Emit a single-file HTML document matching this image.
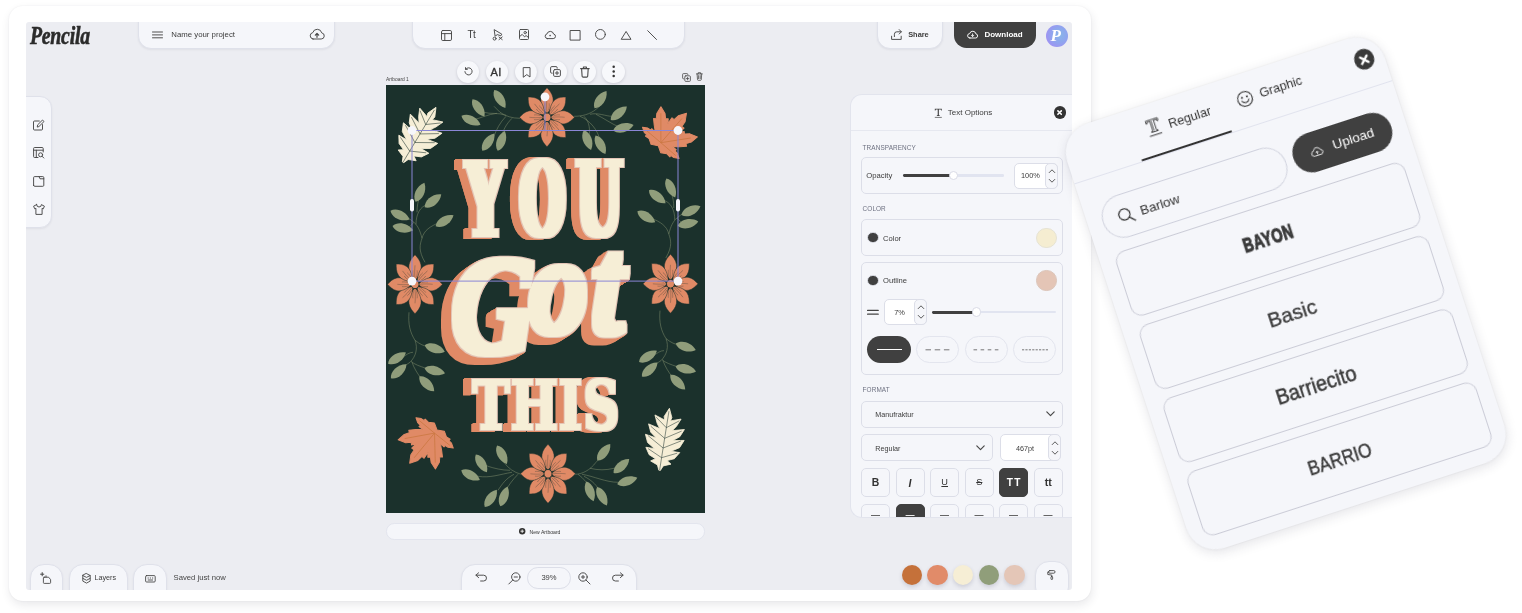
<!DOCTYPE html>
<html lang="en">
<head>
<meta charset="utf-8">
<title>Pencila editor</title>
<style>
*{box-sizing:border-box;margin:0;padding:0}
html,body{width:1522px;height:613px;background:#fff;overflow:hidden}
body{position:relative;font-family:"Liberation Sans",sans-serif;color:#3a3a3a}
.abs{position:absolute}
#card{position:absolute;left:9px;top:6px;width:1082px;height:594.6px;border-radius:14px;background:#fff;box-shadow:1px 4px 10px rgba(40,40,60,.10),0 0 2px rgba(40,40,60,.07)}
#app{will-change:transform;position:absolute;left:26px;top:22px;width:1046px;height:568px;background:#ecedf2;border-radius:3px;overflow:hidden}
.pill{position:absolute;background:#f5f6fa;border:1px solid #dfe1ea;box-shadow:0 1px 2px rgba(60,60,90,.08)}
.t8{font-size:7.8px;line-height:10px;white-space:nowrap;color:#3c3c3c}
svg{position:absolute;overflow:visible}
.ic{fill:none;stroke:#484848;stroke-width:.95;stroke-linecap:round;stroke-linejoin:round}
.lbl{position:absolute;font-size:6.4px;line-height:8px;color:#6d7080;letter-spacing:.1px;white-space:nowrap}
.box{position:absolute;border:1px solid #dcdee8;border-radius:5px;background:#f5f6fa}
.wbox{position:absolute;border:1px solid #dcdee8;border-radius:5px;background:#fff}
.circ{position:absolute;border-radius:50%}
.tb{position:absolute;width:22.4px;height:22.4px;border-radius:50%;background:#f7f8fb;box-shadow:0 1px 3px rgba(50,50,80,.18)}
.fbtn{position:absolute;width:29px;height:28.6px;top:446.4px;border:1px solid #dcdee8;border-radius:5px;background:#f5f6fa;text-align:center;font-size:9px;line-height:27px;color:#333}
</style>
</head>
<body>
<div id="card"></div>
<div id="app">
<!-- logo -->
<div class="abs" style="left:4px;top:-.6px;font-family:'Liberation Serif',serif;font-style:italic;font-weight:bold;font-size:25px;line-height:30px;color:#2b2b2b;-webkit-text-stroke:.6px #2b2b2b;transform-origin:0 0;transform:scaleX(.79);letter-spacing:-.3px">Pencila</div>

<!-- project name pill -->
<div class="pill" style="left:112.2px;top:-14px;width:196.9px;height:41px;border-radius:13px"></div>
<svg class="ic" style="left:126px;top:9px" width="11" height="8" viewBox="0 0 11 8"><path d="M.5 1h10M.5 3.9h10M.5 6.8h10"/></svg>
<div class="abs t8" style="left:145.3px;top:7.6px">Name your project</div>
<svg class="ic" style="left:282.5px;top:6.3px" width="16" height="12" viewBox="0 0 16 12"><path d="M4 11h8.2a3.1 3.1 0 0 0 .5-6.15A4.6 4.6 0 0 0 3.8 4.6 3.25 3.25 0 0 0 4 11z"/><path d="M8 9.3V5.6M6.3 7.2L8 5.5l1.7 1.7" stroke-width="1.2"/></svg>

<!-- tools pill -->
<div class="pill" style="left:386.4px;top:-14px;width:272.8px;height:41px;border-radius:13px"></div>
<svg class="ic" style="left:415px;top:7.5px" width="11" height="11" viewBox="0 0 11 11"><rect x=".5" y=".5" width="10" height="10" rx="1.3"/><path d="M.5 3.6h10M3.8 3.6v6.9"/></svg>
<div class="abs" style="left:441.5px;top:6.5px;font-size:10px;line-height:12px;letter-spacing:-.6px;color:#3c3c3c">Tt</div>
<svg class="ic" style="left:466px;top:7px" width="12" height="12" viewBox="0 0 12 12"><path d="M2.2 1l.9 6.2L5.3 5.6l3.6 1.2L9.6 5.5z"/><circle cx="2.6" cy="9.6" r="1.5"/><path d="M7 8l3.2 2.6M10.2 8L7 10.6"/></svg>
<svg class="ic" style="left:492.5px;top:7.3px" width="10" height="11" viewBox="0 0 10 11"><rect x=".5" y=".5" width="9" height="10" rx="1"/><circle cx="6.2" cy="3.6" r="1.2"/><path d="M.6 7.6l2.6-2.2 2.3 2.4 1.6-1.2 2.3 1.8"/></svg>
<svg class="ic" style="left:517.5px;top:8px" width="12" height="10" viewBox="0 0 12 10"><path d="M3.2 8.6h6a2.3 2.3 0 0 0 .4-4.56A3.4 3.4 0 0 0 3 3.9 2.4 2.4 0 0 0 3.2 8.6z"/><circle cx="6.1" cy="5.6" r=".8" fill="#444" stroke="none"/></svg>
<svg class="ic" style="left:543.6px;top:7.6px" width="11" height="11" viewBox="0 0 11 11"><rect x=".5" y=".5" width="9.6" height="9.6"/></svg>
<svg class="ic" style="left:568.8px;top:7.4px" width="11" height="11" viewBox="0 0 11 11"><circle cx="5.4" cy="5.4" r="4.9"/></svg>
<svg class="ic" style="left:594.8px;top:8.6px" width="11" height="9" viewBox="0 0 11 9"><path d="M5.3.8L10 8.3H.6z"/></svg>
<svg class="ic" style="left:621px;top:8px" width="10" height="10" viewBox="0 0 10 10"><path d="M.7.7l8.8 8.8"/></svg>

<!-- share -->
<div class="pill" style="left:850.6px;top:-14px;width:66.6px;height:41px;border-radius:13px"></div>
<svg class="ic" style="left:864.5px;top:6.8px" width="12" height="11" viewBox="0 0 12 11"><path d="M.6 7.2v3.2h9.6V7.2"/><path d="M3.4 7.6V5.2a2.4 2.4 0 0 1 2.4-2.4h4.4M8.2.6l2.2 2.2-2.2 2.2"/></svg>
<div class="abs" style="left:882.2px;top:7.6px;font-size:7.4px;line-height:10px;font-weight:bold;color:#3c3c3c;white-space:nowrap">Share</div>

<!-- download -->
<div class="abs" style="left:928px;top:-14px;width:82px;height:39.7px;border-radius:12.5px;background:#404040"></div>
<svg class="ic" style="left:941.4px;top:8.2px;stroke:#fff" width="11" height="9" viewBox="0 0 11 9"><path d="M2.9 8h5.6a2.1 2.1 0 0 0 .35-4.17A3.15 3.15 0 0 0 2.7 3.6 2.2 2.2 0 0 0 2.9 8z"/><path d="M5.6 3.9v2.5M4.5 5.4l1.1 1.1 1.1-1.1" stroke-width=".9"/></svg>
<div class="abs" style="left:958.4px;top:7.5px;font-size:8px;line-height:10px;font-weight:bold;color:#fff;white-space:nowrap">Download</div>

<!-- avatar -->
<div class="circ" style="left:1019.7px;top:3.3px;width:22.2px;height:22.2px;background:radial-gradient(circle at 62% 45%,#88b6e8 0%,#8ea6ee 40%,#a38ef3 85%,#a88af5 100%)"></div>
<div class="abs" style="left:1024.6px;top:4.2px;font-family:'Liberation Serif',serif;font-style:italic;font-weight:bold;font-size:17px;line-height:20px;color:#fff">P</div>

<!-- left sidebar -->
<div class="pill" style="left:-14px;top:73.6px;width:39.7px;height:132px;border-radius:12px"></div>
<svg class="ic" style="left:6.5px;top:96.5px" width="12" height="12" viewBox="0 0 12 12"><path d="M6.3 2H1.5a1 1 0 0 0-1 1v7a1 1 0 0 0 1 1h7a1 1 0 0 0 1-1V5.6"/><path d="M4.3 7.7l.4-1.9L9.5 1l1.5 1.5-4.8 4.8z"/></svg>
<svg class="ic" style="left:6.5px;top:125px" width="12" height="12" viewBox="0 0 12 12"><path d="M5 10.5H1.6a1 1 0 0 1-1-1v-8a1 1 0 0 1 1-1h7.6a1 1 0 0 1 1 1V5M.6 3.2h9.6M3.3 3.2v7.3"/><circle cx="7.6" cy="7.8" r="2"/><path d="M9.1 9.3l1.7 1.7"/></svg>
<svg class="ic" style="left:6.5px;top:154px" width="12" height="11" viewBox="0 0 12 11"><path d="M.6 9.3V1.6a1 1 0 0 1 1-1h8.2a1 1 0 0 1 1 1v7.7a1 1 0 0 1-1 1H1.6a1 1 0 0 1-1-1z"/><path d="M6 .6l1 2.2h3.8"/></svg>
<svg class="ic" style="left:6.5px;top:182px" width="12" height="11" viewBox="0 0 12 11"><path d="M3.6.6L.6 2.2l1.1 2.6 1.2-.5v6.1h6.2V4.3l1.2.5 1.1-2.6L8.4.6a2.4 2.4 0 0 1-4.8 0z"/></svg>
<div class="tb" style="left:431.0px;top:38.6px"></div>
<div class="tb" style="left:460.1px;top:38.6px"></div>
<div class="tb" style="left:489.1px;top:38.6px"></div>
<div class="tb" style="left:518.2px;top:38.6px"></div>
<div class="tb" style="left:547.2px;top:38.6px"></div>
<div class="tb" style="left:576.3px;top:38.6px"></div>
<svg class="ic" style="left:437.7px;top:45.3px" width="9" height="9" viewBox="0 0 9 9"><path d="M1.6 2.2A3.6 3.6 0 1 1 .9 4.6"/><path d="M1.5.6v1.8h1.8"/></svg>
<div class="abs" style="left:464.6px;top:43.6px;font-size:11px;line-height:12px;letter-spacing:.2px;color:#333;-webkit-text-stroke:.35px #333">AI</div>
<svg class="ic" style="left:496.6px;top:44.6px" width="8" height="11" viewBox="0 0 8 11"><path d="M.6.6h6.4v9.4L3.8 7.6.6 10z"/></svg>
<svg class="ic" style="left:524px;top:44.4px" width="11" height="11" viewBox="0 0 11 11"><rect x="3.6" y="3.6" width="6.8" height="6.8" rx="1.2"/><path d="M2.2 7.2H1.8A1.2 1.2 0 0 1 .6 6V1.8A1.2 1.2 0 0 1 1.8.6H6a1.2 1.2 0 0 1 1.2 1.2v.4M7 5.4v3.2M5.4 7h3.2"/></svg>
<svg class="ic" style="left:553.6px;top:44.2px;stroke-width:1.1" width="10" height="12" viewBox="0 0 10 12"><path d="M.6 2.6h8.6M3.4 2.4V1h3v1.4M1.6 2.8l.5 7.4a1 1 0 0 0 1 .9h3.6a1 1 0 0 0 1-.9l.5-7.4"/></svg>
<svg style="left:585.9px;top:43.4px" width="4" height="13" viewBox="0 0 4 13"><circle cx="1.7" cy="1.8" r="1.25" fill="#333"/><circle cx="1.7" cy="6.4" r="1.25" fill="#333"/><circle cx="1.7" cy="11" r="1.25" fill="#333"/></svg>
<div class="abs" style="left:360px;top:54.6px;font-size:4.9px;line-height:6px;color:#444;white-space:nowrap">Artboard 1</div>
<svg class="ic" style="left:655.8px;top:50.6px;stroke-width:.8" width="9" height="9" viewBox="0 0 9 9"><rect x="2.8" y="2.8" width="5.6" height="5.6" rx="1"/><path d="M1.8 5.8H1.5A.9.9 0 0 1 .6 4.9V1.5A.9.9 0 0 1 1.5.6h3.4a.9.9 0 0 1 .9.9v.3M5.6 4.4v2.4M4.4 5.6h2.4"/></svg>
<svg class="ic" style="left:669.6px;top:50.4px;stroke-width:.8" width="7" height="9" viewBox="0 0 7 9"><path d="M.5 1.9h5.8M2.2 1.8V.7h2.4v1.1M1.1 2l.4 5.6a.8.8 0 0 0 .8.7h2.2a.8.8 0 0 0 .8-.7L5.7 2M2.6 3.6v3M4.2 3.6v3"/></svg>
<svg style="left:360px;top:62.7px;overflow:hidden" width="319" height="428.1" viewBox="386 84.7 319 428.1">
<filter id="ex1" x="-15%" y="-15%" width="130%" height="135%" color-interpolation-filters="sRGB"><feMorphology in="SourceAlpha" operator="dilate" radius="3.4 1.2" result="fat"/><feFlood flood-color="#f6eed6"/><feComposite in2="fat" operator="in" result="cr"/><feMorphology in="fat" operator="dilate" radius="0.9" result="d"/><feFlood flood-color="#e3c5b7"/><feComposite in2="d" operator="in" result="pk"/><feOffset in="d" dx="-0.94" dy="0.07" result="o1"/><feOffset in="d" dx="-1.89" dy="0.13" result="o2"/><feOffset in="d" dx="-2.83" dy="0.20" result="o3"/><feOffset in="d" dx="-3.78" dy="0.27" result="o4"/><feOffset in="d" dx="-4.72" dy="0.33" result="o5"/><feOffset in="d" dx="-5.67" dy="0.40" result="o6"/><feOffset in="d" dx="-6.61" dy="0.47" result="o7"/><feOffset in="d" dx="-7.56" dy="0.53" result="o8"/><feOffset in="d" dx="-8.50" dy="0.60" result="o9"/><feMerge result="om"><feMergeNode in="o1"/><feMergeNode in="o2"/><feMergeNode in="o3"/><feMergeNode in="o4"/><feMergeNode in="o5"/><feMergeNode in="o6"/><feMergeNode in="o7"/><feMergeNode in="o8"/><feMergeNode in="o9"/></feMerge><feFlood flood-color="#e08a66"/><feComposite in2="om" operator="in" result="og"/><feMerge><feMergeNode in="og"/><feMergeNode in="pk"/><feMergeNode in="cr"/></feMerge></filter>
<filter id="ex2" x="-15%" y="-15%" width="130%" height="135%" color-interpolation-filters="sRGB"><feMorphology in="SourceAlpha" operator="dilate" radius="3.5 3.5" result="fat"/><feFlood flood-color="#f6eed6"/><feComposite in2="fat" operator="in" result="cr"/><feMorphology in="fat" operator="dilate" radius="0.9" result="d"/><feFlood flood-color="#e3c5b7"/><feComposite in2="d" operator="in" result="pk"/><feOffset in="d" dx="-0.71" dy="0.50" result="o1"/><feOffset in="d" dx="-1.43" dy="1.00" result="o2"/><feOffset in="d" dx="-2.14" dy="1.50" result="o3"/><feOffset in="d" dx="-2.86" dy="2.00" result="o4"/><feOffset in="d" dx="-3.57" dy="2.50" result="o5"/><feOffset in="d" dx="-4.29" dy="3.00" result="o6"/><feOffset in="d" dx="-5.00" dy="3.50" result="o7"/><feOffset in="d" dx="-5.71" dy="4.00" result="o8"/><feOffset in="d" dx="-6.43" dy="4.50" result="o9"/><feOffset in="d" dx="-7.14" dy="5.00" result="o10"/><feOffset in="d" dx="-7.86" dy="5.50" result="o11"/><feOffset in="d" dx="-8.57" dy="6.00" result="o12"/><feOffset in="d" dx="-9.29" dy="6.50" result="o13"/><feOffset in="d" dx="-10.00" dy="7.00" result="o14"/><feMerge result="om"><feMergeNode in="o1"/><feMergeNode in="o2"/><feMergeNode in="o3"/><feMergeNode in="o4"/><feMergeNode in="o5"/><feMergeNode in="o6"/><feMergeNode in="o7"/><feMergeNode in="o8"/><feMergeNode in="o9"/><feMergeNode in="o10"/><feMergeNode in="o11"/><feMergeNode in="o12"/><feMergeNode in="o13"/><feMergeNode in="o14"/></feMerge><feFlood flood-color="#e08a66"/><feComposite in2="om" operator="in" result="og"/><feMerge><feMergeNode in="og"/><feMergeNode in="pk"/><feMergeNode in="cr"/></feMerge></filter>
<filter id="ex3" x="-15%" y="-15%" width="130%" height="135%" color-interpolation-filters="sRGB"><feMorphology in="SourceAlpha" operator="dilate" radius="1.4 1.0" result="fat"/><feFlood flood-color="#f6eed6"/><feComposite in2="fat" operator="in" result="cr"/><feMorphology in="fat" operator="dilate" radius="0.9" result="d"/><feFlood flood-color="#e3c5b7"/><feComposite in2="d" operator="in" result="pk"/><feOffset in="d" dx="-0.94" dy="0.07" result="o1"/><feOffset in="d" dx="-1.89" dy="0.13" result="o2"/><feOffset in="d" dx="-2.83" dy="0.20" result="o3"/><feOffset in="d" dx="-3.78" dy="0.27" result="o4"/><feOffset in="d" dx="-4.72" dy="0.33" result="o5"/><feOffset in="d" dx="-5.67" dy="0.40" result="o6"/><feOffset in="d" dx="-6.61" dy="0.47" result="o7"/><feOffset in="d" dx="-7.56" dy="0.53" result="o8"/><feOffset in="d" dx="-8.50" dy="0.60" result="o9"/><feMerge result="om"><feMergeNode in="o1"/><feMergeNode in="o2"/><feMergeNode in="o3"/><feMergeNode in="o4"/><feMergeNode in="o5"/><feMergeNode in="o6"/><feMergeNode in="o7"/><feMergeNode in="o8"/><feMergeNode in="o9"/></feMerge><feFlood flood-color="#e08a66"/><feComposite in2="om" operator="in" result="og"/><feMerge><feMergeNode in="og"/><feMergeNode in="pk"/><feMergeNode in="cr"/></feMerge></filter>
<rect x="386" y="84.7" width="319" height="428.1" fill="#1b312c"/>
<path d="M520 118C512 118 506 116 500 112L494 106M506 115C498 112 490 114 484 112L476 108M497 113C488 114 480 118 472 120M506 116C500 122 496 130 494 136M512 118C506 124 503 130 502 136" fill="none" stroke="#84926f" stroke-width=".5"/>
<path d="M-10.5 0C-6.5-5.6 4-6.2 10.5 0 4 6.2-6.5 5.6-10.5 0z" fill="#909d7b" transform="translate(499.8 98.7) rotate(58)"/>
<path d="M-10.5 0C-6.5-5.6 4-6.2 10.5 0 4 6.2-6.5 5.6-10.5 0z" fill="#909d7b" transform="translate(478.5 107.5) rotate(55)"/>
<path d="M-10.5 0C-6.5-5.6 4-6.2 10.5 0 4 6.2-6.5 5.6-10.5 0z" fill="#909d7b" transform="translate(471.0 120.0) rotate(25)"/>
<path d="M-10.5 0C-6.5-5.6 4-6.2 10.5 0 4 6.2-6.5 5.6-10.5 0z" fill="#909d7b" transform="translate(488.3 141.8) rotate(-55)"/>
<path d="M-10.5 0C-6.5-5.6 4-6.2 10.5 0 4 6.2-6.5 5.6-10.5 0z" fill="#909d7b" transform="translate(501.3 140.5) rotate(-70)"/>
<path d="M574 116C582 116 590 114 596 109L602 104M590 114C598 112 606 116 612 116L618 113M596 114C604 118 612 124 620 127M584 116C590 122 590 130 589 136M580 116C590 120 598 130 600 140" fill="none" stroke="#84926f" stroke-width=".5"/>
<path d="M-10.5 0C-6.5-5.6 4-6.2 10.5 0 4 6.2-6.5 5.6-10.5 0z" fill="#909d7b" transform="translate(600.5 99.4) rotate(-55)"/>
<path d="M-10.5 0C-6.5-5.6 4-6.2 10.5 0 4 6.2-6.5 5.6-10.5 0z" fill="#909d7b" transform="translate(618.8 113.0) rotate(-40)"/>
<path d="M-10.5 0C-6.5-5.6 4-6.2 10.5 0 4 6.2-6.5 5.6-10.5 0z" fill="#909d7b" transform="translate(623.4 127.4) rotate(-15)"/>
<path d="M-10.5 0C-6.5-5.6 4-6.2 10.5 0 4 6.2-6.5 5.6-10.5 0z" fill="#909d7b" transform="translate(587.5 139.8) rotate(70)"/>
<path d="M-10.5 0C-6.5-5.6 4-6.2 10.5 0 4 6.2-6.5 5.6-10.5 0z" fill="#909d7b" transform="translate(600.5 144.4) rotate(62)"/>
<path d="M425 262C418 250 420 244 422 238 420 230 418 226 414 222L406 216M414 222L408 228M422 238C424 230 430 226 440 222M416 224C416 214 420 206 428 204M417 212C417 206 418 200 420 196" fill="none" stroke="#84926f" stroke-width=".5"/>
<path d="M-10.5 0C-6.5-5.6 4-6.2 10.5 0 4 6.2-6.5 5.6-10.5 0z" fill="#909d7b" transform="translate(420.0 192.0) rotate(-65)"/>
<path d="M-10.5 0C-6.5-5.6 4-6.2 10.5 0 4 6.2-6.5 5.6-10.5 0z" fill="#909d7b" transform="translate(433.0 200.6) rotate(-38)"/>
<path d="M-10.5 0C-6.5-5.6 4-6.2 10.5 0 4 6.2-6.5 5.6-10.5 0z" fill="#909d7b" transform="translate(444.6 220.5) rotate(-32)"/>
<path d="M-10.5 0C-6.5-5.6 4-6.2 10.5 0 4 6.2-6.5 5.6-10.5 0z" fill="#909d7b" transform="translate(400.0 214.8) rotate(25)"/>
<path d="M-10.5 0C-6.5-5.6 4-6.2 10.5 0 4 6.2-6.5 5.6-10.5 0z" fill="#909d7b" transform="translate(402.8 227.8) rotate(12)"/>
<path d="M665.8 257.7C672.8 245.7 670.8 239.7 668.8 233.7 670.8 225.7 672.8 221.7 676.8 217.7L684.8 211.7M676.8 217.7L682.8 223.7M668.8 233.7C666.8 225.7 660.8 221.7 650.8 217.7M674.8 219.7C674.8 209.7 670.8 201.7 662.8 199.7M673.8 207.7C673.8 201.7 672.8 195.7 670.8 191.7" fill="none" stroke="#84926f" stroke-width=".5"/>
<path d="M-10.5 0C-6.5-5.6 4-6.2 10.5 0 4 6.2-6.5 5.6-10.5 0z" fill="#909d7b" transform="translate(670.8 187.8) rotate(65)"/>
<path d="M-10.5 0C-6.5-5.6 4-6.2 10.5 0 4 6.2-6.5 5.6-10.5 0z" fill="#909d7b" transform="translate(657.3 196.4) rotate(38)"/>
<path d="M-10.5 0C-6.5-5.6 4-6.2 10.5 0 4 6.2-6.5 5.6-10.5 0z" fill="#909d7b" transform="translate(646.3 216.5) rotate(32)"/>
<path d="M-10.5 0C-6.5-5.6 4-6.2 10.5 0 4 6.2-6.5 5.6-10.5 0z" fill="#909d7b" transform="translate(690.9 210.3) rotate(-25)"/>
<path d="M-10.5 0C-6.5-5.6 4-6.2 10.5 0 4 6.2-6.5 5.6-10.5 0z" fill="#909d7b" transform="translate(688.0 223.3) rotate(-12)"/>
<path d="M409 312C408 324 410 332 415 340 418 348 416 356 410 362L404 366M415 340C420 344 424 346 428 346M413 352C410 352 406 354 402 358M411 361C414 364 420 366 426 368M412 362C414 368 418 374 421 378" fill="none" stroke="#84926f" stroke-width=".5"/>
<path d="M-10.5 0C-6.5-5.6 4-6.2 10.5 0 4 6.2-6.5 5.6-10.5 0z" fill="#909d7b" transform="translate(434.8 348.2) rotate(18)"/>
<path d="M-10.5 0C-6.5-5.6 4-6.2 10.5 0 4 6.2-6.5 5.6-10.5 0z" fill="#909d7b" transform="translate(397.0 357.8) rotate(-32)"/>
<path d="M-10.5 0C-6.5-5.6 4-6.2 10.5 0 4 6.2-6.5 5.6-10.5 0z" fill="#909d7b" transform="translate(398.7 371.0) rotate(-42)"/>
<path d="M-10.5 0C-6.5-5.6 4-6.2 10.5 0 4 6.2-6.5 5.6-10.5 0z" fill="#909d7b" transform="translate(434.8 370.4) rotate(14)"/>
<path d="M-10.5 0C-6.5-5.6 4-6.2 10.5 0 4 6.2-6.5 5.6-10.5 0z" fill="#909d7b" transform="translate(426.8 383.6) rotate(45)"/>
<g transform="translate(251 -1.7)">
<path d="M409 312C408 324 410 332 415 340 418 348 416 356 410 362L404 366M415 340C420 344 424 346 428 346M413 352C410 352 406 354 402 358M411 361C414 364 420 366 426 368M412 362C414 368 418 374 421 378" fill="none" stroke="#84926f" stroke-width=".5"/>
<path d="M-10.5 0C-6.5-5.6 4-6.2 10.5 0 4 6.2-6.5 5.6-10.5 0z" fill="#909d7b" transform="translate(434.8 348.2) rotate(18)"/>
<path d="M-10.5 0C-6.5-5.6 4-6.2 10.5 0 4 6.2-6.5 5.6-10.5 0z" fill="#909d7b" transform="translate(397.0 357.8) rotate(-32)"/>
<path d="M-10.5 0C-6.5-5.6 4-6.2 10.5 0 4 6.2-6.5 5.6-10.5 0z" fill="#909d7b" transform="translate(398.7 371.0) rotate(-42)"/>
<path d="M-10.5 0C-6.5-5.6 4-6.2 10.5 0 4 6.2-6.5 5.6-10.5 0z" fill="#909d7b" transform="translate(434.8 370.4) rotate(14)"/>
<path d="M-10.5 0C-6.5-5.6 4-6.2 10.5 0 4 6.2-6.5 5.6-10.5 0z" fill="#909d7b" transform="translate(426.8 383.6) rotate(45)"/>
</g>
<path d="M521 474C514 472 508 468 504 462L500 458M510 470C502 470 494 468 488 466L484 464M512 472C500 474 490 478 478 476M514 474C506 478 502 484 498 490M518 474C512 480 508 486 506 490" fill="none" stroke="#84926f" stroke-width=".5"/>
<path d="M-10.5 0C-6.5-5.6 4-6.2 10.5 0 4 6.2-6.5 5.6-10.5 0z" fill="#909d7b" transform="translate(502.0 454.5) rotate(62)"/>
<path d="M-10.5 0C-6.5-5.6 4-6.2 10.5 0 4 6.2-6.5 5.6-10.5 0z" fill="#909d7b" transform="translate(481.4 463.0) rotate(58)"/>
<path d="M-10.5 0C-6.5-5.6 4-6.2 10.5 0 4 6.2-6.5 5.6-10.5 0z" fill="#909d7b" transform="translate(470.6 474.8) rotate(28)"/>
<path d="M-10.5 0C-6.5-5.6 4-6.2 10.5 0 4 6.2-6.5 5.6-10.5 0z" fill="#909d7b" transform="translate(490.8 498.0) rotate(-55)"/>
<path d="M-10.5 0C-6.5-5.6 4-6.2 10.5 0 4 6.2-6.5 5.6-10.5 0z" fill="#909d7b" transform="translate(504.0 496.0) rotate(-70)"/>
<path d="M575 474C582 474 590 470 596 462L600 458M590 468C598 470 606 470 614 468L618 467M582 474C594 476 606 482 618 482M578 474C584 478 588 484 590 488M584 476C592 480 598 486 600 492" fill="none" stroke="#84926f" stroke-width=".5"/>
<path d="M-10.5 0C-6.5-5.6 4-6.2 10.5 0 4 6.2-6.5 5.6-10.5 0z" fill="#909d7b" transform="translate(603.8 452.0) rotate(-52)"/>
<path d="M-10.5 0C-6.5-5.6 4-6.2 10.5 0 4 6.2-6.5 5.6-10.5 0z" fill="#909d7b" transform="translate(621.4 465.8) rotate(-42)"/>
<path d="M-10.5 0C-6.5-5.6 4-6.2 10.5 0 4 6.2-6.5 5.6-10.5 0z" fill="#909d7b" transform="translate(627.3 480.7) rotate(-18)"/>
<path d="M-10.5 0C-6.5-5.6 4-6.2 10.5 0 4 6.2-6.5 5.6-10.5 0z" fill="#909d7b" transform="translate(590.0 491.0) rotate(70)"/>
<path d="M-10.5 0C-6.5-5.6 4-6.2 10.5 0 4 6.2-6.5 5.6-10.5 0z" fill="#909d7b" transform="translate(602.0 496.0) rotate(62)"/>
<g transform="translate(547 117) scale(.93 1)"><path d="M0-3.5C-3-7-7.6-13-6.4-19.5-5.6-24-2.4-27 0-29.5 2.4-27 5.6-24 6.4-19.5 7.6-13 3-7 0-3.5z" fill="#e08a66" stroke="#1b312c" stroke-width=".5" transform="rotate(0) scale(1)"/><path d="M0-3.5C-3-7-7.6-13-6.4-19.5-5.6-24-2.4-27 0-29.5 2.4-27 5.6-24 6.4-19.5 7.6-13 3-7 0-3.5z" fill="#e08a66" stroke="#1b312c" stroke-width=".5" transform="rotate(45) scale(0.97)"/><path d="M0-3.5C-3-7-7.6-13-6.4-19.5-5.6-24-2.4-27 0-29.5 2.4-27 5.6-24 6.4-19.5 7.6-13 3-7 0-3.5z" fill="#e08a66" stroke="#1b312c" stroke-width=".5" transform="rotate(90) scale(1)"/><path d="M0-3.5C-3-7-7.6-13-6.4-19.5-5.6-24-2.4-27 0-29.5 2.4-27 5.6-24 6.4-19.5 7.6-13 3-7 0-3.5z" fill="#e08a66" stroke="#1b312c" stroke-width=".5" transform="rotate(135) scale(0.97)"/><path d="M0-3.5C-3-7-7.6-13-6.4-19.5-5.6-24-2.4-27 0-29.5 2.4-27 5.6-24 6.4-19.5 7.6-13 3-7 0-3.5z" fill="#e08a66" stroke="#1b312c" stroke-width=".5" transform="rotate(180) scale(1)"/><path d="M0-3.5C-3-7-7.6-13-6.4-19.5-5.6-24-2.4-27 0-29.5 2.4-27 5.6-24 6.4-19.5 7.6-13 3-7 0-3.5z" fill="#e08a66" stroke="#1b312c" stroke-width=".5" transform="rotate(225) scale(0.97)"/><path d="M0-3.5C-3-7-7.6-13-6.4-19.5-5.6-24-2.4-27 0-29.5 2.4-27 5.6-24 6.4-19.5 7.6-13 3-7 0-3.5z" fill="#e08a66" stroke="#1b312c" stroke-width=".5" transform="rotate(270) scale(1)"/><path d="M0-3.5C-3-7-7.6-13-6.4-19.5-5.6-24-2.4-27 0-29.5 2.4-27 5.6-24 6.4-19.5 7.6-13 3-7 0-3.5z" fill="#e08a66" stroke="#1b312c" stroke-width=".5" transform="rotate(315) scale(0.97)"/><path d="M0-5C-.6-10-.4-15 0-19M-1.6-7C-2.4-10-2.6-12-2.3-14M1.6-7C2.4-10 2.6-12 2.3-14" fill="none" stroke="#1b312c" stroke-opacity=".75" stroke-width=".4" transform="rotate(0)"/><path d="M0-5C-.6-10-.4-15 0-19M-1.6-7C-2.4-10-2.6-12-2.3-14M1.6-7C2.4-10 2.6-12 2.3-14" fill="none" stroke="#1b312c" stroke-opacity=".75" stroke-width=".4" transform="rotate(45)"/><path d="M0-5C-.6-10-.4-15 0-19M-1.6-7C-2.4-10-2.6-12-2.3-14M1.6-7C2.4-10 2.6-12 2.3-14" fill="none" stroke="#1b312c" stroke-opacity=".75" stroke-width=".4" transform="rotate(90)"/><path d="M0-5C-.6-10-.4-15 0-19M-1.6-7C-2.4-10-2.6-12-2.3-14M1.6-7C2.4-10 2.6-12 2.3-14" fill="none" stroke="#1b312c" stroke-opacity=".75" stroke-width=".4" transform="rotate(135)"/><path d="M0-5C-.6-10-.4-15 0-19M-1.6-7C-2.4-10-2.6-12-2.3-14M1.6-7C2.4-10 2.6-12 2.3-14" fill="none" stroke="#1b312c" stroke-opacity=".75" stroke-width=".4" transform="rotate(180)"/><path d="M0-5C-.6-10-.4-15 0-19M-1.6-7C-2.4-10-2.6-12-2.3-14M1.6-7C2.4-10 2.6-12 2.3-14" fill="none" stroke="#1b312c" stroke-opacity=".75" stroke-width=".4" transform="rotate(225)"/><path d="M0-5C-.6-10-.4-15 0-19M-1.6-7C-2.4-10-2.6-12-2.3-14M1.6-7C2.4-10 2.6-12 2.3-14" fill="none" stroke="#1b312c" stroke-opacity=".75" stroke-width=".4" transform="rotate(270)"/><path d="M0-5C-.6-10-.4-15 0-19M-1.6-7C-2.4-10-2.6-12-2.3-14M1.6-7C2.4-10 2.6-12 2.3-14" fill="none" stroke="#1b312c" stroke-opacity=".75" stroke-width=".4" transform="rotate(315)"/><circle r="4.3" fill="#e08a66" stroke="#1b312c" stroke-width=".9"/></g>
<g transform="translate(415 284) scale(.93 1)"><path d="M0-3.5C-3-7-7.6-13-6.4-19.5-5.6-24-2.4-27 0-29.5 2.4-27 5.6-24 6.4-19.5 7.6-13 3-7 0-3.5z" fill="#e08a66" stroke="#1b312c" stroke-width=".5" transform="rotate(0) scale(1)"/><path d="M0-3.5C-3-7-7.6-13-6.4-19.5-5.6-24-2.4-27 0-29.5 2.4-27 5.6-24 6.4-19.5 7.6-13 3-7 0-3.5z" fill="#e08a66" stroke="#1b312c" stroke-width=".5" transform="rotate(45) scale(0.97)"/><path d="M0-3.5C-3-7-7.6-13-6.4-19.5-5.6-24-2.4-27 0-29.5 2.4-27 5.6-24 6.4-19.5 7.6-13 3-7 0-3.5z" fill="#e08a66" stroke="#1b312c" stroke-width=".5" transform="rotate(90) scale(1)"/><path d="M0-3.5C-3-7-7.6-13-6.4-19.5-5.6-24-2.4-27 0-29.5 2.4-27 5.6-24 6.4-19.5 7.6-13 3-7 0-3.5z" fill="#e08a66" stroke="#1b312c" stroke-width=".5" transform="rotate(135) scale(0.97)"/><path d="M0-3.5C-3-7-7.6-13-6.4-19.5-5.6-24-2.4-27 0-29.5 2.4-27 5.6-24 6.4-19.5 7.6-13 3-7 0-3.5z" fill="#e08a66" stroke="#1b312c" stroke-width=".5" transform="rotate(180) scale(1)"/><path d="M0-3.5C-3-7-7.6-13-6.4-19.5-5.6-24-2.4-27 0-29.5 2.4-27 5.6-24 6.4-19.5 7.6-13 3-7 0-3.5z" fill="#e08a66" stroke="#1b312c" stroke-width=".5" transform="rotate(225) scale(0.97)"/><path d="M0-3.5C-3-7-7.6-13-6.4-19.5-5.6-24-2.4-27 0-29.5 2.4-27 5.6-24 6.4-19.5 7.6-13 3-7 0-3.5z" fill="#e08a66" stroke="#1b312c" stroke-width=".5" transform="rotate(270) scale(1)"/><path d="M0-3.5C-3-7-7.6-13-6.4-19.5-5.6-24-2.4-27 0-29.5 2.4-27 5.6-24 6.4-19.5 7.6-13 3-7 0-3.5z" fill="#e08a66" stroke="#1b312c" stroke-width=".5" transform="rotate(315) scale(0.97)"/><path d="M0-5C-.6-10-.4-15 0-19M-1.6-7C-2.4-10-2.6-12-2.3-14M1.6-7C2.4-10 2.6-12 2.3-14" fill="none" stroke="#1b312c" stroke-opacity=".75" stroke-width=".4" transform="rotate(0)"/><path d="M0-5C-.6-10-.4-15 0-19M-1.6-7C-2.4-10-2.6-12-2.3-14M1.6-7C2.4-10 2.6-12 2.3-14" fill="none" stroke="#1b312c" stroke-opacity=".75" stroke-width=".4" transform="rotate(45)"/><path d="M0-5C-.6-10-.4-15 0-19M-1.6-7C-2.4-10-2.6-12-2.3-14M1.6-7C2.4-10 2.6-12 2.3-14" fill="none" stroke="#1b312c" stroke-opacity=".75" stroke-width=".4" transform="rotate(90)"/><path d="M0-5C-.6-10-.4-15 0-19M-1.6-7C-2.4-10-2.6-12-2.3-14M1.6-7C2.4-10 2.6-12 2.3-14" fill="none" stroke="#1b312c" stroke-opacity=".75" stroke-width=".4" transform="rotate(135)"/><path d="M0-5C-.6-10-.4-15 0-19M-1.6-7C-2.4-10-2.6-12-2.3-14M1.6-7C2.4-10 2.6-12 2.3-14" fill="none" stroke="#1b312c" stroke-opacity=".75" stroke-width=".4" transform="rotate(180)"/><path d="M0-5C-.6-10-.4-15 0-19M-1.6-7C-2.4-10-2.6-12-2.3-14M1.6-7C2.4-10 2.6-12 2.3-14" fill="none" stroke="#1b312c" stroke-opacity=".75" stroke-width=".4" transform="rotate(225)"/><path d="M0-5C-.6-10-.4-15 0-19M-1.6-7C-2.4-10-2.6-12-2.3-14M1.6-7C2.4-10 2.6-12 2.3-14" fill="none" stroke="#1b312c" stroke-opacity=".75" stroke-width=".4" transform="rotate(270)"/><path d="M0-5C-.6-10-.4-15 0-19M-1.6-7C-2.4-10-2.6-12-2.3-14M1.6-7C2.4-10 2.6-12 2.3-14" fill="none" stroke="#1b312c" stroke-opacity=".75" stroke-width=".4" transform="rotate(315)"/><circle r="4.3" fill="#e08a66" stroke="#1b312c" stroke-width=".9"/></g>
<g transform="translate(670.5 283.5) scale(.93 1)"><path d="M0-3.5C-3-7-7.6-13-6.4-19.5-5.6-24-2.4-27 0-29.5 2.4-27 5.6-24 6.4-19.5 7.6-13 3-7 0-3.5z" fill="#e08a66" stroke="#1b312c" stroke-width=".5" transform="rotate(0) scale(1)"/><path d="M0-3.5C-3-7-7.6-13-6.4-19.5-5.6-24-2.4-27 0-29.5 2.4-27 5.6-24 6.4-19.5 7.6-13 3-7 0-3.5z" fill="#e08a66" stroke="#1b312c" stroke-width=".5" transform="rotate(45) scale(0.97)"/><path d="M0-3.5C-3-7-7.6-13-6.4-19.5-5.6-24-2.4-27 0-29.5 2.4-27 5.6-24 6.4-19.5 7.6-13 3-7 0-3.5z" fill="#e08a66" stroke="#1b312c" stroke-width=".5" transform="rotate(90) scale(1)"/><path d="M0-3.5C-3-7-7.6-13-6.4-19.5-5.6-24-2.4-27 0-29.5 2.4-27 5.6-24 6.4-19.5 7.6-13 3-7 0-3.5z" fill="#e08a66" stroke="#1b312c" stroke-width=".5" transform="rotate(135) scale(0.97)"/><path d="M0-3.5C-3-7-7.6-13-6.4-19.5-5.6-24-2.4-27 0-29.5 2.4-27 5.6-24 6.4-19.5 7.6-13 3-7 0-3.5z" fill="#e08a66" stroke="#1b312c" stroke-width=".5" transform="rotate(180) scale(1)"/><path d="M0-3.5C-3-7-7.6-13-6.4-19.5-5.6-24-2.4-27 0-29.5 2.4-27 5.6-24 6.4-19.5 7.6-13 3-7 0-3.5z" fill="#e08a66" stroke="#1b312c" stroke-width=".5" transform="rotate(225) scale(0.97)"/><path d="M0-3.5C-3-7-7.6-13-6.4-19.5-5.6-24-2.4-27 0-29.5 2.4-27 5.6-24 6.4-19.5 7.6-13 3-7 0-3.5z" fill="#e08a66" stroke="#1b312c" stroke-width=".5" transform="rotate(270) scale(1)"/><path d="M0-3.5C-3-7-7.6-13-6.4-19.5-5.6-24-2.4-27 0-29.5 2.4-27 5.6-24 6.4-19.5 7.6-13 3-7 0-3.5z" fill="#e08a66" stroke="#1b312c" stroke-width=".5" transform="rotate(315) scale(0.97)"/><path d="M0-5C-.6-10-.4-15 0-19M-1.6-7C-2.4-10-2.6-12-2.3-14M1.6-7C2.4-10 2.6-12 2.3-14" fill="none" stroke="#1b312c" stroke-opacity=".75" stroke-width=".4" transform="rotate(0)"/><path d="M0-5C-.6-10-.4-15 0-19M-1.6-7C-2.4-10-2.6-12-2.3-14M1.6-7C2.4-10 2.6-12 2.3-14" fill="none" stroke="#1b312c" stroke-opacity=".75" stroke-width=".4" transform="rotate(45)"/><path d="M0-5C-.6-10-.4-15 0-19M-1.6-7C-2.4-10-2.6-12-2.3-14M1.6-7C2.4-10 2.6-12 2.3-14" fill="none" stroke="#1b312c" stroke-opacity=".75" stroke-width=".4" transform="rotate(90)"/><path d="M0-5C-.6-10-.4-15 0-19M-1.6-7C-2.4-10-2.6-12-2.3-14M1.6-7C2.4-10 2.6-12 2.3-14" fill="none" stroke="#1b312c" stroke-opacity=".75" stroke-width=".4" transform="rotate(135)"/><path d="M0-5C-.6-10-.4-15 0-19M-1.6-7C-2.4-10-2.6-12-2.3-14M1.6-7C2.4-10 2.6-12 2.3-14" fill="none" stroke="#1b312c" stroke-opacity=".75" stroke-width=".4" transform="rotate(180)"/><path d="M0-5C-.6-10-.4-15 0-19M-1.6-7C-2.4-10-2.6-12-2.3-14M1.6-7C2.4-10 2.6-12 2.3-14" fill="none" stroke="#1b312c" stroke-opacity=".75" stroke-width=".4" transform="rotate(225)"/><path d="M0-5C-.6-10-.4-15 0-19M-1.6-7C-2.4-10-2.6-12-2.3-14M1.6-7C2.4-10 2.6-12 2.3-14" fill="none" stroke="#1b312c" stroke-opacity=".75" stroke-width=".4" transform="rotate(270)"/><path d="M0-5C-.6-10-.4-15 0-19M-1.6-7C-2.4-10-2.6-12-2.3-14M1.6-7C2.4-10 2.6-12 2.3-14" fill="none" stroke="#1b312c" stroke-opacity=".75" stroke-width=".4" transform="rotate(315)"/><circle r="4.3" fill="#e08a66" stroke="#1b312c" stroke-width=".9"/></g>
<g transform="translate(548 473.5) scale(.93 1)"><path d="M0-3.5C-3-7-7.6-13-6.4-19.5-5.6-24-2.4-27 0-29.5 2.4-27 5.6-24 6.4-19.5 7.6-13 3-7 0-3.5z" fill="#e08a66" stroke="#1b312c" stroke-width=".5" transform="rotate(0) scale(1)"/><path d="M0-3.5C-3-7-7.6-13-6.4-19.5-5.6-24-2.4-27 0-29.5 2.4-27 5.6-24 6.4-19.5 7.6-13 3-7 0-3.5z" fill="#e08a66" stroke="#1b312c" stroke-width=".5" transform="rotate(45) scale(0.97)"/><path d="M0-3.5C-3-7-7.6-13-6.4-19.5-5.6-24-2.4-27 0-29.5 2.4-27 5.6-24 6.4-19.5 7.6-13 3-7 0-3.5z" fill="#e08a66" stroke="#1b312c" stroke-width=".5" transform="rotate(90) scale(1)"/><path d="M0-3.5C-3-7-7.6-13-6.4-19.5-5.6-24-2.4-27 0-29.5 2.4-27 5.6-24 6.4-19.5 7.6-13 3-7 0-3.5z" fill="#e08a66" stroke="#1b312c" stroke-width=".5" transform="rotate(135) scale(0.97)"/><path d="M0-3.5C-3-7-7.6-13-6.4-19.5-5.6-24-2.4-27 0-29.5 2.4-27 5.6-24 6.4-19.5 7.6-13 3-7 0-3.5z" fill="#e08a66" stroke="#1b312c" stroke-width=".5" transform="rotate(180) scale(1)"/><path d="M0-3.5C-3-7-7.6-13-6.4-19.5-5.6-24-2.4-27 0-29.5 2.4-27 5.6-24 6.4-19.5 7.6-13 3-7 0-3.5z" fill="#e08a66" stroke="#1b312c" stroke-width=".5" transform="rotate(225) scale(0.97)"/><path d="M0-3.5C-3-7-7.6-13-6.4-19.5-5.6-24-2.4-27 0-29.5 2.4-27 5.6-24 6.4-19.5 7.6-13 3-7 0-3.5z" fill="#e08a66" stroke="#1b312c" stroke-width=".5" transform="rotate(270) scale(1)"/><path d="M0-3.5C-3-7-7.6-13-6.4-19.5-5.6-24-2.4-27 0-29.5 2.4-27 5.6-24 6.4-19.5 7.6-13 3-7 0-3.5z" fill="#e08a66" stroke="#1b312c" stroke-width=".5" transform="rotate(315) scale(0.97)"/><path d="M0-5C-.6-10-.4-15 0-19M-1.6-7C-2.4-10-2.6-12-2.3-14M1.6-7C2.4-10 2.6-12 2.3-14" fill="none" stroke="#1b312c" stroke-opacity=".75" stroke-width=".4" transform="rotate(0)"/><path d="M0-5C-.6-10-.4-15 0-19M-1.6-7C-2.4-10-2.6-12-2.3-14M1.6-7C2.4-10 2.6-12 2.3-14" fill="none" stroke="#1b312c" stroke-opacity=".75" stroke-width=".4" transform="rotate(45)"/><path d="M0-5C-.6-10-.4-15 0-19M-1.6-7C-2.4-10-2.6-12-2.3-14M1.6-7C2.4-10 2.6-12 2.3-14" fill="none" stroke="#1b312c" stroke-opacity=".75" stroke-width=".4" transform="rotate(90)"/><path d="M0-5C-.6-10-.4-15 0-19M-1.6-7C-2.4-10-2.6-12-2.3-14M1.6-7C2.4-10 2.6-12 2.3-14" fill="none" stroke="#1b312c" stroke-opacity=".75" stroke-width=".4" transform="rotate(135)"/><path d="M0-5C-.6-10-.4-15 0-19M-1.6-7C-2.4-10-2.6-12-2.3-14M1.6-7C2.4-10 2.6-12 2.3-14" fill="none" stroke="#1b312c" stroke-opacity=".75" stroke-width=".4" transform="rotate(180)"/><path d="M0-5C-.6-10-.4-15 0-19M-1.6-7C-2.4-10-2.6-12-2.3-14M1.6-7C2.4-10 2.6-12 2.3-14" fill="none" stroke="#1b312c" stroke-opacity=".75" stroke-width=".4" transform="rotate(225)"/><path d="M0-5C-.6-10-.4-15 0-19M-1.6-7C-2.4-10-2.6-12-2.3-14M1.6-7C2.4-10 2.6-12 2.3-14" fill="none" stroke="#1b312c" stroke-opacity=".75" stroke-width=".4" transform="rotate(270)"/><path d="M0-5C-.6-10-.4-15 0-19M-1.6-7C-2.4-10-2.6-12-2.3-14M1.6-7C2.4-10 2.6-12 2.3-14" fill="none" stroke="#1b312c" stroke-opacity=".75" stroke-width=".4" transform="rotate(315)"/><circle r="4.3" fill="#e08a66" stroke="#1b312c" stroke-width=".9"/></g>
<g transform="translate(660.9 142.4) rotate(41)"><path d="M0.0 4.0L-6.4 7.7L-11.6 4.7L-16.0 5.2L-16.0 3.4L-19.4 3.1L-24.0 0.4L-19.5 -2.4L-16.1 -2.8L-16.1 -4.6L-11.7 -4.3L-12.8 -5.7L-16.5 -8.8L-21.4 -13.4L-19.3 -15.1L-22.3 -19.4L-23.6 -27.2L-16.1 -24.8L-12.2 -21.2L-10.2 -23.0L-6.4 -17.6L-6.0 -15.9L-7.3 -18.9L-8.0 -26.1L-5.1 -26.0L-4.5 -31.7L0.0 -39.0L4.5 -31.7L5.1 -26.0L8.0 -26.1L7.3 -18.9L5.8 -16.0L6.3 -18.2L10.1 -23.8L12.2 -22.0L16.1 -25.7L23.8 -28.3L22.5 -20.3L19.6 -15.8L21.7 -14.1L16.8 -9.3L12.7 -5.9L11.7 -4.5L16.1 -4.9L16.0 -3.1L19.5 -2.7L24.0 0.0L19.5 2.7L16.0 3.1L16.1 4.9L11.7 4.5L6.4 7.7z" fill="#e08a66" stroke="#e08a66" stroke-width="1" stroke-linejoin="round"/><path d="M0 0L-19.7 0.3M0 0L-19.4 -22.3M0 0L0.0 -32.0M0 0L19.5 -23.2M0 0L19.7 0.0" stroke="#c9763f" stroke-width=".7" fill="none"/></g>
<g transform="translate(434.5 432.8) rotate(-140.5)"><path d="M0.0 4.0L-6.4 7.7L-11.6 4.7L-16.0 5.2L-16.0 3.4L-19.4 3.1L-24.0 0.4L-19.5 -2.4L-16.1 -2.8L-16.1 -4.6L-11.7 -4.3L-12.8 -5.7L-16.5 -8.8L-21.4 -13.4L-19.3 -15.1L-22.3 -19.4L-23.6 -27.2L-16.1 -24.8L-12.2 -21.2L-10.2 -23.0L-6.4 -17.6L-6.0 -15.9L-7.3 -18.9L-8.0 -26.1L-5.1 -26.0L-4.5 -31.7L0.0 -39.0L4.5 -31.7L5.1 -26.0L8.0 -26.1L7.3 -18.9L5.8 -16.0L6.3 -18.2L10.1 -23.8L12.2 -22.0L16.1 -25.7L23.8 -28.3L22.5 -20.3L19.6 -15.8L21.7 -14.1L16.8 -9.3L12.7 -5.9L11.7 -4.5L16.1 -4.9L16.0 -3.1L19.5 -2.7L24.0 0.0L19.5 2.7L16.0 3.1L16.1 4.9L11.7 4.5L6.4 7.7z" fill="#e08a66" stroke="#e08a66" stroke-width="1" stroke-linejoin="round"/><path d="M0 0L-19.7 0.3M0 0L-19.4 -22.3M0 0L0.0 -32.0M0 0L19.5 -23.2M0 0L19.7 0.0" stroke="#c9763f" stroke-width=".7" fill="none"/></g>
<g transform="translate(419.5 134.5) rotate(31)"><path d="M0 -32L4 -23L3 -19.5L13.5 -23L10 -15L6.5 -10L18.5 -13L15 -5L8.5 0L20 -2L16.5 6L8.5 11L17.5 11L13 18L6 21L10.5 24L3 27L0.8 32L-0.8 32L-3 27L-10.5 24L-6 21L-13 18L-17.5 11L-8.5 11L-16.5 6L-20 -2L-8.5 0L-15 -5L-18.5 -13L-6.5 -10L-10 -15L-13.5 -23L-3 -19.5L-4 -23L0 -32z" fill="#f6eed6" stroke="#f6eed6" stroke-width=".8" stroke-linejoin="round"/><path d="M0 32V-29M0 -12L12 -21M0 -12L-12 -21M0 -1L16 -11M0 -1L-16 -11M0 9L17 -1M0 9L-17 -1M0 19L15 12M0 19L-15 12" stroke="#1b312c" stroke-width=".5" fill="none"/></g>
<g transform="translate(664.5 439) rotate(9) scale(.98)"><path d="M0 -32L4 -23L3 -19.5L13.5 -23L10 -15L6.5 -10L18.5 -13L15 -5L8.5 0L20 -2L16.5 6L8.5 11L17.5 11L13 18L6 21L10.5 24L3 27L0.8 32L-0.8 32L-3 27L-10.5 24L-6 21L-13 18L-17.5 11L-8.5 11L-16.5 6L-20 -2L-8.5 0L-15 -5L-18.5 -13L-6.5 -10L-10 -15L-13.5 -23L-3 -19.5L-4 -23L0 -32z" fill="#f6eed6" stroke="#f6eed6" stroke-width=".8" stroke-linejoin="round"/><path d="M0 32V-29M0 -12L12 -21M0 -12L-12 -21M0 -1L16 -11M0 -1L-16 -11M0 9L17 -1M0 9L-17 -1M0 19L15 12M0 19L-15 12" stroke="#1b312c" stroke-width=".5" fill="none"/></g>
<g font-weight="bold" fill="#f6eed6">
<g filter="url(#ex1)"><text font-family="'DejaVu Serif',serif" transform="translate(466.4 235.4) scale(.505 1)" font-size="103" dx="0 32 23">YOU</text></g>
<g filter="url(#ex2)"><text font-family="'Liberation Serif',serif" transform="translate(451 332.5) scale(.84 1)" font-style="italic" font-size="140" dx="0 -8 4" dy="20 -20 0">Got</text></g>
<g filter="url(#ex3)"><text font-family="'DejaVu Serif',serif" transform="translate(472.4 428.3) scale(.75 1)" font-size="66.5" letter-spacing="1.5">THIS</text></g>
</g>
</svg>
<svg style="left:0;top:0" width="1046" height="568" viewBox="26 22 1046 568">
<path d="M545 97V130.5" stroke="#8a86d6" stroke-width="1" fill="none"/>
<rect x="412" y="130.5" width="266" height="150.6" fill="none" stroke="#8a86d6" stroke-width="1"/>
<circle cx="412" cy="130.5" r="4.4" fill="#f6f6fb"/>
<circle cx="678" cy="130.5" r="4.4" fill="#f6f6fb"/>
<circle cx="412" cy="281.1" r="4.4" fill="#f6f6fb"/>
<circle cx="678" cy="281.1" r="4.4" fill="#f6f6fb"/>
<circle cx="545" cy="96.8" r="4.4" fill="#f6f6fb"/>
<rect x="410" y="199" width="4" height="12.5" rx="2" fill="#f6f6fb"/>
<rect x="676" y="199" width="4" height="12.5" rx="2" fill="#f6f6fb"/>
</svg>
<div class="abs" style="left:360px;top:501.2px;width:319px;height:16.4px;border-radius:8.2px;background:#f5f6fa;border:1px solid #e3e5ee"></div>
<svg style="left:493.4px;top:506.4px" width="6.4" height="6.4" viewBox="0 0 6 6"><circle cx="3" cy="3" r="3" fill="#333"/><path d="M3 1.4v3.2M1.4 3h3.2" stroke="#fff" stroke-width=".8"/></svg>
<div class="abs" style="left:503.6px;top:506.9px;font-size:5.1px;line-height:6px;color:#333;white-space:nowrap">New Artboard</div>
<!-- right panel: page x 851..1072+ , y 95..517.5 => app left 825 top 73 -->
<div class="abs" id="rp" style="left:824px;top:72px;width:241px;height:423.5px;border-radius:12px 0 0 12px;background:#f5f6fa;border:1px solid #e2e4ed;border-right:0;overflow:hidden">
 <div class="abs" style="left:1px;top:1px;width:240px;height:423px">
 <div class="abs" style="left:-1px;top:33.5px;width:242px;height:1px;background:#e6e8f0"></div>
 <svg style="left:82px;top:11.6px" width="9" height="10" viewBox="0 0 9 10"><path d="M.8.8h7v1.8h-.7l-.4-1H4.9v5.5l.9.3v.5H2.8v-.5l.9-.3V1.6H1.9l-.4 1H.8z" fill="#444"/><path d="M.8 9.4h7" stroke="#444" stroke-width=".7"/></svg>
 <div class="abs t8" style="left:95.8px;top:12.3px;font-size:8px">Text Options</div>
 <div class="circ" style="left:201.6px;top:10px;width:12.8px;height:12.8px;background:#333"></div>
 <svg style="left:205.4px;top:13.8px" width="6" height="6" viewBox="0 0 6 6"><path d="M.9.9l3.4 3.4M4.3.9L.9 4.3" stroke="#fff" stroke-width="1.6" stroke-linecap="round"/></svg>

 <div class="lbl" style="left:10.6px;top:47.6px">TRANSPARENCY</div>
 <div class="box" style="left:9.4px;top:61.3px;width:201.4px;height:36.4px"></div>
 <div class="abs t8" style="left:14.2px;top:75.1px;font-size:7.7px">Opacity</div>
 <div class="abs" style="left:50.8px;top:78.4px;width:101px;height:2.4px;border-radius:1.2px;background:#e1e4f0"></div>
 <div class="abs" style="left:50.8px;top:78.2px;width:50px;height:2.8px;border-radius:1.4px;background:#404040"></div>
 <div class="circ" style="left:96.5px;top:74.8px;width:9.6px;height:9.6px;background:#fff;border:1px solid #d9dbe6"></div>
 <div class="wbox" style="left:162.3px;top:66.6px;width:43.4px;height:26.4px"></div>
 <div class="abs" style="left:192.6px;top:66.6px;width:13.1px;height:26.4px;border:1px solid #dcdee8;border-radius:5px;background:#f5f6fa"></div>
 <div class="abs t8" style="left:167.4px;top:75.1px;font-size:7.4px;width:22px;text-align:center">100%</div>
 <svg class="ic" style="left:195.6px;top:71.6px" width="8" height="16" viewBox="0 0 8 16"><path d="M1.2 4.6L4 1.8l2.8 2.8M1.2 11.4L4 14.2l2.8-2.8" stroke-width=".9"/></svg>

 <div class="lbl" style="left:10.6px;top:109.4px">COLOR</div>
 <div class="box" style="left:9.4px;top:123.4px;width:201.4px;height:36.8px"></div>
 <div class="circ" style="left:15.4px;top:136.2px;width:11.2px;height:11.2px;background:#404040;border:1.2px solid #e4e6ee"></div>
 <div class="abs t8" style="left:31px;top:137.7px;font-size:7.6px">Color</div>
 <div class="circ" style="left:184.2px;top:131.6px;width:20.4px;height:20.4px;background:#f5edd1;border:1px solid #e6e3d4"></div>

 <div class="box" style="left:9.4px;top:166.4px;width:201.4px;height:113px"></div>
 <div class="circ" style="left:15.4px;top:178.8px;width:11.2px;height:11.2px;background:#404040;border:1.2px solid #e4e6ee"></div>
 <div class="abs t8" style="left:31px;top:180.3px;font-size:7.6px">Outline</div>
 <div class="circ" style="left:184.2px;top:174.2px;width:20.4px;height:20.4px;background:#e4c5b6;border:1px solid #dcc6bb"></div>
 <svg style="left:15px;top:212.6px" width="12" height="7" viewBox="0 0 12 7"><path d="M.6 1.4h10.6M.6 5.2h10.6" stroke="#444" stroke-width="1.3" stroke-linecap="round"/></svg>
 <div class="wbox" style="left:31.6px;top:203px;width:43.6px;height:26.2px"></div>
 <div class="abs" style="left:62.2px;top:203px;width:13px;height:26.2px;border:1px solid #dcdee8;border-radius:5px;background:#f5f6fa"></div>
 <div class="abs t8" style="left:36.6px;top:211.9px;font-size:7.4px;width:22px;text-align:center">7%</div>
 <svg class="ic" style="left:65px;top:208px" width="8" height="16" viewBox="0 0 8 16"><path d="M1.2 4.6L4 1.8l2.8 2.8M1.2 11.4L4 14.2l2.8-2.8" stroke-width=".9"/></svg>
 <div class="abs" style="left:80px;top:215px;width:124.4px;height:2.4px;border-radius:1.2px;background:#e1e4f0"></div>
 <div class="abs" style="left:80px;top:214.8px;width:44px;height:2.8px;border-radius:1.4px;background:#404040"></div>
 <div class="circ" style="left:119.6px;top:211.4px;width:9.6px;height:9.6px;background:#fff;border:1px solid #d9dbe6"></div>
 <!-- line style buttons -->
 <div class="abs" style="left:15.3px;top:240.4px;width:43.7px;height:26.8px;border-radius:13.4px;background:#404040"></div>
 <div class="abs" style="left:24.5px;top:253.2px;width:25.4px;height:1.3px;background:#fff"></div>
 <div class="abs" style="left:64px;top:240.4px;width:43.2px;height:26.8px;border-radius:13.4px;border:1px solid #e3e5ee"></div>
 <div class="abs" style="left:112.5px;top:240.4px;width:43.2px;height:26.8px;border-radius:13.4px;border:1px solid #e3e5ee"></div>
 <div class="abs" style="left:161px;top:240.4px;width:43.4px;height:26.8px;border-radius:13.4px;border:1px solid #e3e5ee"></div>
 <svg style="left:0;top:0" width="240" height="300"><path d="M73.5 253.8h24" stroke="#777" stroke-width="1" stroke-dasharray="5.5 3.7"/><path d="M121.5 253.8h25" stroke="#777" stroke-width="1" stroke-dasharray="3.6 3.5"/><path d="M170 253.8h26" stroke="#777" stroke-width="1" stroke-dasharray="2.2 1.2"/></svg>

 <div class="lbl" style="left:10.6px;top:290.4px">FORMAT</div>
 <div class="box" style="left:9px;top:304.5px;width:202px;height:27px"></div>
 <div class="abs t8" style="left:23.3px;top:314.3px;font-size:7.2px">Manufraktur</div>
 <svg class="ic" style="left:194px;top:315.4px" width="9" height="6" viewBox="0 0 9 6"><path d="M.8.9l3.7 3.7L8.2.9" stroke-width="1.2"/></svg>
 <div class="box" style="left:9px;top:338.3px;width:131.7px;height:27px"></div>
 <div class="abs t8" style="left:23.3px;top:348.1px;font-size:7.2px">Regular</div>
 <svg class="ic" style="left:124px;top:349.2px" width="9" height="6" viewBox="0 0 9 6"><path d="M.8.9l3.7 3.7L8.2.9" stroke-width="1.2"/></svg>
 <div class="wbox" style="left:148px;top:338.3px;width:61px;height:27px"></div>
 <div class="abs" style="left:196px;top:338.3px;width:13px;height:27px;border:1px solid #dcdee8;border-radius:5px;background:#f5f6fa"></div>
 <div class="abs t8" style="left:157px;top:348.1px;font-size:7.2px;width:32px;text-align:center">467pt</div>
 <svg class="ic" style="left:198.6px;top:343.8px" width="8" height="16" viewBox="0 0 8 16"><path d="M1.2 4.6L4 1.8l2.8 2.8M1.2 11.4L4 14.2l2.8-2.8" stroke-width=".9"/></svg>

 <!-- format buttons row1: top 468.4 page => 372.4 -->
 <div class="fbtn" style="left:9px;top:372.4px;font-weight:bold;font-size:10.4px;line-height:28px">B</div>
 <div class="fbtn" style="left:43.6px;top:372.4px;font-style:italic;font-weight:bold;font-size:10.6px;line-height:28px">I</div>
 <div class="fbtn" style="left:78.2px;top:372.4px;text-decoration:underline;font-size:9.2px;line-height:27.6px">U</div>
 <div class="fbtn" style="left:112.8px;top:372.4px;text-decoration:line-through;font-size:9.2px;line-height:27.6px">S</div>
 <div class="fbtn" style="left:147.2px;top:372.4px;background:#404040;border-color:#404040;color:#fff;font-weight:bold;letter-spacing:1.4px;font-size:10.2px;line-height:27.6px;text-indent:1.2px">TT</div>
 <div class="fbtn" style="left:181.7px;top:372.4px;font-weight:bold;font-size:10.6px;line-height:27.6px">tt</div>
 <!-- row2 -->
 <div class="fbtn" style="left:9px;top:408px"></div>
 <div class="fbtn" style="left:43.6px;top:408px;background:#404040;border-color:#404040"></div>
 <div class="fbtn" style="left:78.2px;top:408px"></div>
 <div class="fbtn" style="left:112.8px;top:408px"></div>
 <div class="fbtn" style="left:147.2px;top:408px"></div>
 <div class="fbtn" style="left:181.7px;top:408px"></div>
 <svg style="left:0;top:408px" width="240" height="20"><g stroke="#555" stroke-width=".9"><path d="M19 11.5h9M19 14.5h6"/><path d="M88 11.5h9M91 14.5h6"/><path d="M122.5 11.5h9M122.5 14.5h9"/><path d="M157 11.5h9M157 14.5h9"/><path d="M191.5 11.5h9M191.5 14.5h9"/></g><path d="M53.6 11.5h9M55 14.5h6" stroke="#fff" stroke-width=".9"/></svg>
</div>
</div>
<!-- bottom bar (app coords) -->
<div class="pill" style="left:3.5px;top:542.4px;width:33.2px;height:40px;border-radius:14px"></div>
<svg class="ic" style="left:13.5px;top:549.6px;stroke-width:.9" width="12" height="12" viewBox="0 0 12 12"><path d="M4.2 5.2h4.4l2 2.4v3a.8.8 0 0 1-.8.8H4.2a.8.8 0 0 1-.8-.8V6a.8.8 0 0 1 .8-.8zM6 5.2V3.8"/><path d="M2.2.6v3.2M.6 2.2h3.2" stroke-width="1"/></svg>
<div class="pill" style="left:42.5px;top:542.4px;width:59.8px;height:40px;border-radius:14px"></div>
<svg class="ic" style="left:55.6px;top:551px;stroke-width:.9" width="9" height="11" viewBox="0 0 9 11"><path d="M4.5.6L8.2 2.5 4.5 4.4.8 2.5z"/><path d="M.8 2.5v5.6l3.7 2 3.7-2V2.5M.8 5.3l3.7 2 3.7-2"/></svg>
<div class="abs t8" style="left:68.5px;top:551.4px;font-size:7.2px">Layers</div>
<div class="pill" style="left:107.4px;top:542.4px;width:33.2px;height:40px;border-radius:14px"></div>
<svg class="ic" style="left:118.8px;top:552.6px;stroke-width:.9" width="11" height="8" viewBox="0 0 11 8"><rect x=".6" y=".6" width="9.6" height="6.4" rx="1"/><path d="M3.2 5h4.4M3 3h.4M5.2 3h.4M7.4 3h.4"/></svg>
<div class="abs t8" style="left:147.6px;top:551.4px;font-size:7.7px;color:#444">Saved just now</div>

<!-- zoom pill -->
<div class="pill" style="left:435.3px;top:542px;width:175.4px;height:40px;border-radius:14px"></div>
<svg class="ic" style="left:448.6px;top:550.4px" width="13" height="11" viewBox="0 0 13 11"><path d="M3.6.8L.9 3.2l2.7 2.4M1 3.2h7.6a2.9 2.9 0 0 1 0 5.8H5.6"/></svg>
<svg class="ic" style="left:481.6px;top:549.6px" width="13" height="13" viewBox="0 0 13 13"><circle cx="7.8" cy="5" r="4.2"/><path d="M4.8 8L.8 12M6.2 5h3.2"/></svg>
<div class="abs" style="left:501.2px;top:545px;width:43.4px;height:21.6px;border-radius:10.8px;border:1px solid #dcdee8;background:#f5f6fa"></div>
<div class="abs t8" style="left:509px;top:551.2px;width:28px;text-align:center;font-size:7.6px">39%</div>
<svg class="ic" style="left:551.6px;top:549.6px" width="13" height="13" viewBox="0 0 13 13"><circle cx="5" cy="5" r="4.2"/><path d="M8 8l4 4M3.4 5h3.2M5 3.4v3.2"/></svg>
<svg class="ic" style="left:584.6px;top:550.4px" width="13" height="11" viewBox="0 0 13 11"><path d="M9.4.8l2.7 2.4-2.7 2.4M12 3.2H4.4a2.9 2.9 0 0 0 0 5.8h3"/></svg>

<!-- swatches -->
<div class="circ" style="left:875.8px;top:542.7px;width:20.4px;height:20.4px;background:#c5713a;box-shadow:0 2px 4px rgba(70,70,100,.2)"></div>
<div class="circ" style="left:901.3px;top:542.7px;width:20.4px;height:20.4px;background:#e18b69;box-shadow:0 2px 4px rgba(70,70,100,.2)"></div>
<div class="circ" style="left:926.9px;top:542.7px;width:20.4px;height:20.4px;background:#f6eed5;box-shadow:0 2px 4px rgba(70,70,100,.2)"></div>
<div class="circ" style="left:952.6px;top:542.7px;width:20.4px;height:20.4px;background:#909e7a;box-shadow:0 2px 4px rgba(70,70,100,.2)"></div>
<div class="circ" style="left:978.4px;top:542.7px;width:20.4px;height:20.4px;background:#e4c6b7;box-shadow:0 2px 4px rgba(70,70,100,.2)"></div>
<div class="pill" style="left:1009.4px;top:539px;width:33.2px;height:40px;border-radius:14px"></div>
<svg class="ic" style="left:1020.6px;top:547.6px;stroke-width:.9" width="9" height="10" viewBox="0 0 9 10"><rect x="1.6" y=".6" width="6.4" height="2.6" rx="1.2"/><path d="M1.6 1.9H.8v2.6l4 .6v1.4"/><rect x="4" y="6.5" width="1.6" height="3" rx=".6"/></svg>
</div><!-- /app -->
<div id="fp" style="position:absolute;left:1058px;top:133.2px;width:333.5px;height:445.6px;transform-origin:0 0;transform:rotate(-18deg);will-change:transform;background:#f5f6fa;border-radius:30px;box-shadow:0 3px 12px rgba(40,40,70,.13),0 0 3px rgba(40,40,70,.08)">
<div class="circ" style="left:303.8px;top:14.2px;width:20.6px;height:20.6px;background:#3a3a3a"></div>
<svg style="left:309.1px;top:19.5px" width="10" height="10" viewBox="0 0 10 10"><path d="M1.6 1.6l6.8 6.8M8.4 1.6L1.6 8.4" stroke="#fff" stroke-width="2.3" stroke-linecap="round"/></svg>
<svg style="left:84.6px;top:15px" width="16" height="18" viewBox="0 0 16 18"><path d="M1.6 1h12.4v3h-.9l-.7-1.9H9.7v10.2l1.5.5v.7H4.4v-.7l1.5-.5V2.1H3.2L2.5 4h-.9z" fill="none" stroke="#3a3a3a" stroke-width=".9" stroke-linejoin="round"/><path d="M7.2 2.2v10.4" stroke="#3a3a3a" stroke-width=".7"/><path d="M1.4 16.8h12.8" stroke="#3a3a3a" stroke-width="1"/></svg>
<div class="abs" style="left:108px;top:18.6px;font-size:12.6px;line-height:15px;color:#333;white-space:nowrap">Regular</div>
<svg style="left:179.8px;top:16.6px" width="17" height="17" viewBox="0 0 17 17"><circle cx="8.4" cy="8.4" r="7.4" fill="none" stroke="#333" stroke-width="1.1"/><circle cx="5.8" cy="6.4" r="1" fill="#333"/><circle cx="11" cy="6.4" r="1" fill="#333"/><path d="M4.8 9.8a3.9 3.9 0 0 0 7.2 0" fill="none" stroke="#333" stroke-width="1.1" stroke-linecap="round"/></svg>
<div class="abs" style="left:204px;top:17.6px;font-size:12.6px;line-height:15px;color:#333;white-space:nowrap">Graphic</div>
<div class="abs" style="left:0;top:52.8px;width:333.5px;height:1px;background:#e1e3ee"></div>
<div class="abs" style="left:70.8px;top:50.6px;width:95.4px;height:2.7px;background:#333;border-radius:1px"></div>
<div class="abs" style="left:15.4px;top:77.4px;width:192.4px;height:43.4px;border-radius:21.7px;border:1px solid #cfd1dd;background:#f5f6fa"></div>
<svg style="left:31px;top:91px" width="17" height="17" viewBox="0 0 17 17"><circle cx="7" cy="7" r="5.6" fill="none" stroke="#333" stroke-width="1.2"/><path d="M11.2 11.2l4.6 4.6" stroke="#333" stroke-width="1.3" stroke-linecap="round"/></svg>
<div class="abs" style="left:54.3px;top:92.2px;font-size:13.4px;line-height:15px;color:#333;white-space:nowrap">Barlow</div>
<div class="abs" style="left:216.4px;top:76.6px;width:102.2px;height:40px;border-radius:20px;background:#404040"></div>
<svg style="left:233.6px;top:92.4px" width="13" height="10.4" viewBox="0 0 15 12"><path d="M4 11h7.4a2.8 2.8 0 0 0 .5-5.56A4.2 4.2 0 0 0 3.7 5 2.95 2.95 0 0 0 4 11z" fill="none" stroke="#fff" stroke-width="1" stroke-linejoin="round"/><path d="M7.6 9.2V6.2M6.2 7.5l1.4-1.4L9 7.5" fill="none" stroke="#fff" stroke-width="1" stroke-linecap="round" stroke-linejoin="round"/></svg>
<div class="abs" style="left:257.6px;top:88.6px;font-size:13.6px;line-height:15px;color:#fff;white-space:nowrap">Upload</div>
<div class="abs" style="left:15.4px;top:132px;width:303.3px;height:67.6px;border-radius:11px;border:1px solid #cbccd7;text-align:center;line-height:65px;color:#3a3a3a;white-space:nowrap"><span style="display:inline-block;font-weight:bold;font-size:21px;transform:scaleX(.68);letter-spacing:.5px;-webkit-text-stroke:1.1px #3a3a3a;position:relative;top:-1.2px">BAYON</span></div>
<div class="abs" style="left:15.4px;top:209px;width:303.3px;height:67.6px;border-radius:11px;border:1px solid #cbccd7;text-align:center;line-height:65px;color:#3a3a3a;white-space:nowrap"><span style="display:inline-block;font-size:20.6px;-webkit-text-stroke:.3px #3a3a3a;position:relative;top:.6px">Basic</span></div>
<div class="abs" style="left:15.4px;top:286px;width:303.3px;height:67.6px;border-radius:11px;border:1px solid #cbccd7;text-align:center;line-height:65px;color:#3a3a3a;white-space:nowrap"><span style="display:inline-block;font-size:22px;transform:scaleX(.9);-webkit-text-stroke:.5px #3a3a3a">Barriecito</span></div>
<div class="abs" style="left:15.4px;top:363.2px;width:303.3px;height:67.6px;border-radius:11px;border:1px solid #cbccd7;text-align:center;line-height:65px;color:#3a3a3a;white-space:nowrap"><span style="display:inline-block;font-size:21px;transform:scaleX(.82);-webkit-text-stroke:.4px #3a3a3a">BARRIO</span></div>
</div>
</body></html>
